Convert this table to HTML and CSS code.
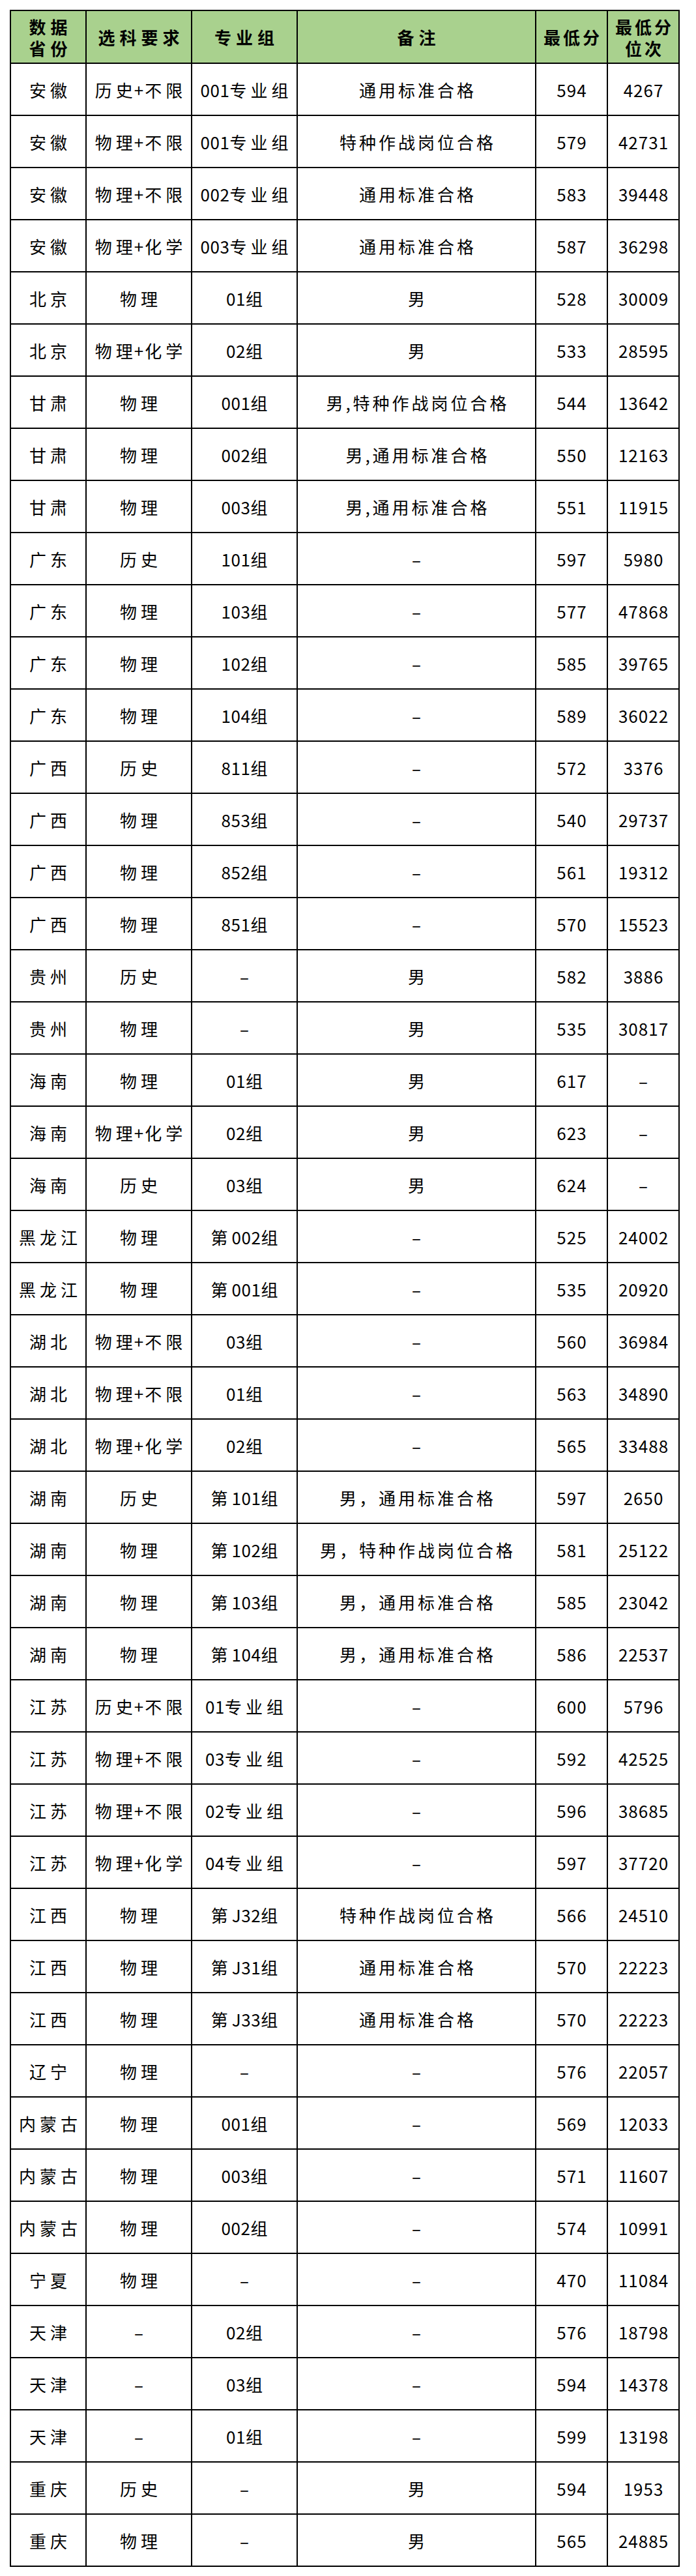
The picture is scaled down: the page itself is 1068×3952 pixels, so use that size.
FILE: index.html
```html
<!DOCTYPE html>
<html lang="zh-CN">
<head>
<meta charset="utf-8">
<title>最低分及位次</title>
<link rel="stylesheet" href="styles.css">
</head>
<body>
<div class="sheet">
<table class="grid">
<colgroup>
<col class="c-prov"><col class="c-subj"><col class="c-group"><col class="c-note"><col class="c-score"><col class="c-rank">
</colgroup>
<thead>
<tr><th class="prov">数据<br>省份</th><th>选科要求</th><th>专业组</th><th>备注</th><th class="num-h">最低分</th><th class="num-h">最低分<br>位次</th></tr>
</thead>
<tbody>
<tr><td>安徽</td><td>历史<span class="p">+</span>不限</td><td><span class="n">001</span>专业组</td><td class="note">通用标准合格</td><td class="num">594</td><td class="num">4267</td></tr>
<tr><td>安徽</td><td>物理<span class="p">+</span>不限</td><td><span class="n">001</span>专业组</td><td class="note">特种作战岗位合格</td><td class="num">579</td><td class="num">42731</td></tr>
<tr><td>安徽</td><td>物理<span class="p">+</span>不限</td><td><span class="n">002</span>专业组</td><td class="note">通用标准合格</td><td class="num">583</td><td class="num">39448</td></tr>
<tr><td>安徽</td><td>物理<span class="p">+</span>化学</td><td><span class="n">003</span>专业组</td><td class="note">通用标准合格</td><td class="num">587</td><td class="num">36298</td></tr>
<tr><td>北京</td><td>物理</td><td><span class="n">01</span>组</td><td class="note">男</td><td class="num">528</td><td class="num">30009</td></tr>
<tr><td>北京</td><td>物理<span class="p">+</span>化学</td><td><span class="n">02</span>组</td><td class="note">男</td><td class="num">533</td><td class="num">28595</td></tr>
<tr><td>甘肃</td><td>物理</td><td><span class="n">001</span>组</td><td class="note">男,特种作战岗位合格</td><td class="num">544</td><td class="num">13642</td></tr>
<tr><td>甘肃</td><td>物理</td><td><span class="n">002</span>组</td><td class="note">男,通用标准合格</td><td class="num">550</td><td class="num">12163</td></tr>
<tr><td>甘肃</td><td>物理</td><td><span class="n">003</span>组</td><td class="note">男,通用标准合格</td><td class="num">551</td><td class="num">11915</td></tr>
<tr><td>广东</td><td>历史</td><td><span class="n">101</span>组</td><td class="note dash">–</td><td class="num">597</td><td class="num">5980</td></tr>
<tr><td>广东</td><td>物理</td><td><span class="n">103</span>组</td><td class="note dash">–</td><td class="num">577</td><td class="num">47868</td></tr>
<tr><td>广东</td><td>物理</td><td><span class="n">102</span>组</td><td class="note dash">–</td><td class="num">585</td><td class="num">39765</td></tr>
<tr><td>广东</td><td>物理</td><td><span class="n">104</span>组</td><td class="note dash">–</td><td class="num">589</td><td class="num">36022</td></tr>
<tr><td>广西</td><td>历史</td><td><span class="n">811</span>组</td><td class="note dash">–</td><td class="num">572</td><td class="num">3376</td></tr>
<tr><td>广西</td><td>物理</td><td><span class="n">853</span>组</td><td class="note dash">–</td><td class="num">540</td><td class="num">29737</td></tr>
<tr><td>广西</td><td>物理</td><td><span class="n">852</span>组</td><td class="note dash">–</td><td class="num">561</td><td class="num">19312</td></tr>
<tr><td>广西</td><td>物理</td><td><span class="n">851</span>组</td><td class="note dash">–</td><td class="num">570</td><td class="num">15523</td></tr>
<tr><td>贵州</td><td>历史</td><td class="dash">–</td><td class="note">男</td><td class="num">582</td><td class="num">3886</td></tr>
<tr><td>贵州</td><td>物理</td><td class="dash">–</td><td class="note">男</td><td class="num">535</td><td class="num">30817</td></tr>
<tr><td>海南</td><td>物理</td><td><span class="n">01</span>组</td><td class="note">男</td><td class="num">617</td><td class="num dash">–</td></tr>
<tr><td>海南</td><td>物理<span class="p">+</span>化学</td><td><span class="n">02</span>组</td><td class="note">男</td><td class="num">623</td><td class="num dash">–</td></tr>
<tr><td>海南</td><td>历史</td><td><span class="n">03</span>组</td><td class="note">男</td><td class="num">624</td><td class="num dash">–</td></tr>
<tr><td>黑龙江</td><td>物理</td><td>第<span class="n">002</span>组</td><td class="note dash">–</td><td class="num">525</td><td class="num">24002</td></tr>
<tr><td>黑龙江</td><td>物理</td><td>第<span class="n">001</span>组</td><td class="note dash">–</td><td class="num">535</td><td class="num">20920</td></tr>
<tr><td>湖北</td><td>物理<span class="p">+</span>不限</td><td><span class="n">03</span>组</td><td class="note dash">–</td><td class="num">560</td><td class="num">36984</td></tr>
<tr><td>湖北</td><td>物理<span class="p">+</span>不限</td><td><span class="n">01</span>组</td><td class="note dash">–</td><td class="num">563</td><td class="num">34890</td></tr>
<tr><td>湖北</td><td>物理<span class="p">+</span>化学</td><td><span class="n">02</span>组</td><td class="note dash">–</td><td class="num">565</td><td class="num">33488</td></tr>
<tr><td>湖南</td><td>历史</td><td>第<span class="n">101</span>组</td><td class="note">男，通用标准合格</td><td class="num">597</td><td class="num">2650</td></tr>
<tr><td>湖南</td><td>物理</td><td>第<span class="n">102</span>组</td><td class="note">男，特种作战岗位合格</td><td class="num">581</td><td class="num">25122</td></tr>
<tr><td>湖南</td><td>物理</td><td>第<span class="n">103</span>组</td><td class="note">男，通用标准合格</td><td class="num">585</td><td class="num">23042</td></tr>
<tr><td>湖南</td><td>物理</td><td>第<span class="n">104</span>组</td><td class="note">男，通用标准合格</td><td class="num">586</td><td class="num">22537</td></tr>
<tr><td>江苏</td><td>历史<span class="p">+</span>不限</td><td><span class="n">01</span>专业组</td><td class="note dash">–</td><td class="num">600</td><td class="num">5796</td></tr>
<tr><td>江苏</td><td>物理<span class="p">+</span>不限</td><td><span class="n">03</span>专业组</td><td class="note dash">–</td><td class="num">592</td><td class="num">42525</td></tr>
<tr><td>江苏</td><td>物理<span class="p">+</span>不限</td><td><span class="n">02</span>专业组</td><td class="note dash">–</td><td class="num">596</td><td class="num">38685</td></tr>
<tr><td>江苏</td><td>物理<span class="p">+</span>化学</td><td><span class="n">04</span>专业组</td><td class="note dash">–</td><td class="num">597</td><td class="num">37720</td></tr>
<tr><td>江西</td><td>物理</td><td>第<span class="n">J32</span>组</td><td class="note">特种作战岗位合格</td><td class="num">566</td><td class="num">24510</td></tr>
<tr><td>江西</td><td>物理</td><td>第<span class="n">J31</span>组</td><td class="note">通用标准合格</td><td class="num">570</td><td class="num">22223</td></tr>
<tr><td>江西</td><td>物理</td><td>第<span class="n">J33</span>组</td><td class="note">通用标准合格</td><td class="num">570</td><td class="num">22223</td></tr>
<tr><td>辽宁</td><td>物理</td><td class="dash">–</td><td class="note dash">–</td><td class="num">576</td><td class="num">22057</td></tr>
<tr><td>内蒙古</td><td>物理</td><td><span class="n">001</span>组</td><td class="note dash">–</td><td class="num">569</td><td class="num">12033</td></tr>
<tr><td>内蒙古</td><td>物理</td><td><span class="n">003</span>组</td><td class="note dash">–</td><td class="num">571</td><td class="num">11607</td></tr>
<tr><td>内蒙古</td><td>物理</td><td><span class="n">002</span>组</td><td class="note dash">–</td><td class="num">574</td><td class="num">10991</td></tr>
<tr><td>宁夏</td><td>物理</td><td class="dash">–</td><td class="note dash">–</td><td class="num">470</td><td class="num">11084</td></tr>
<tr><td>天津</td><td class="dash">–</td><td><span class="n">02</span>组</td><td class="note dash">–</td><td class="num">576</td><td class="num">18798</td></tr>
<tr><td>天津</td><td class="dash">–</td><td><span class="n">03</span>组</td><td class="note dash">–</td><td class="num">594</td><td class="num">14378</td></tr>
<tr><td>天津</td><td class="dash">–</td><td><span class="n">01</span>组</td><td class="note dash">–</td><td class="num">599</td><td class="num">13198</td></tr>
<tr><td>重庆</td><td>历史</td><td class="dash">–</td><td class="note">男</td><td class="num">594</td><td class="num">1953</td></tr>
<tr><td>重庆</td><td>物理</td><td class="dash">–</td><td class="note">男</td><td class="num">565</td><td class="num">24885</td></tr>
</tbody>
</table>
</div>
</body>
</html>
```
FILE: styles.css
```css
html, body {
  margin: 0;
  padding: 0;
  background: #ffffff;
}

body {
  font-family: "Noto Sans CJK SC", "Noto Sans", sans-serif;
  color: #000000;
}

.sheet {
  padding: 15px 0 0 15px;
}

.grid {
  border-collapse: collapse;
  table-layout: fixed;
  width: 1028px;
  border: 2px solid #000000;
}

.c-prov { width: 116px; }
.c-subj { width: 162px; }
.c-group { width: 162px; }
.c-note { width: 366px; }
.c-score { width: 110px; }
.c-rank { width: 110px; }

.grid th,
.grid td {
  border: 2px solid #000000;
  text-align: center;
  vertical-align: middle;
  font-size: 26px;
  letter-spacing: 6px;
  padding: 0 0 0 6px;
  white-space: nowrap;
  color: #000000;
}

.grid thead tr {
  height: 81px;
}

.grid th {
  background: #a9d18e;
  font-weight: 700;
  line-height: 33px;
  letter-spacing: 7px;
  padding-left: 7px;
}

.grid th.num-h {
  letter-spacing: 4px;
  padding-left: 4px;
}

.grid tbody tr {
  height: 80px;
}

.grid td.note {
  letter-spacing: 4px;
  padding-left: 4px;
}

.grid td.num {
  letter-spacing: 1px;
  padding-left: 1px;
}

.n {
  letter-spacing: 0.5px;
}

.p {
  letter-spacing: 2px;
  margin-left: -4px;
}

.grid td.dash {
  letter-spacing: 0;
  padding-left: 0;
}
```
